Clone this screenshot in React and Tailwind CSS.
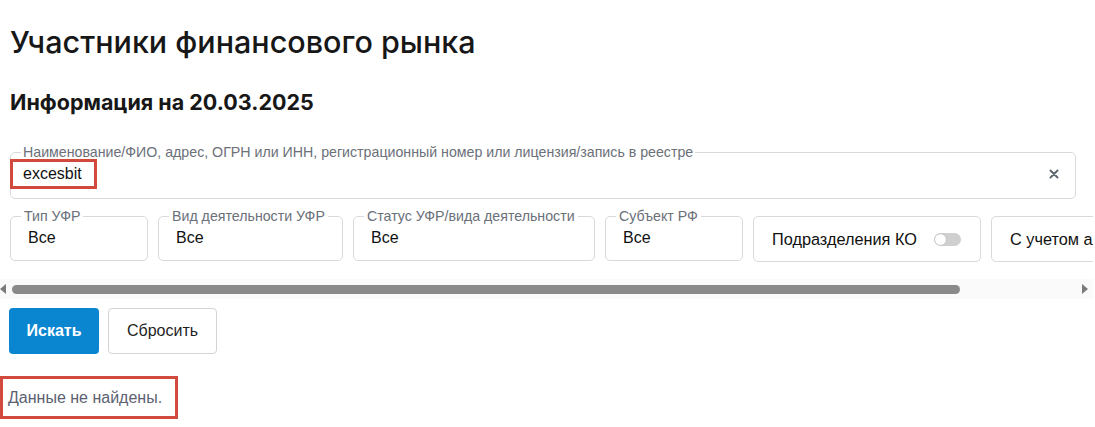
import React from "react";

const filters = [
  { label: "Тип УФР", value: "Все", w: "w-[138px]" },
  { label: "Вид деятельности УФР", value: "Все", w: "w-[185px]" },
  { label: "Статус УФР/вида деятельности", value: "Все", w: "w-[242px]" },
  { label: "Субъект РФ", value: "Все", w: "w-[138px]" },
];

const Toggle = () => (
  <span className="relative inline-flex items-center w-[27px] h-[13px] rounded-full bg-[#cfcfcf]">
    <span className="absolute left-[1px] w-[11px] h-[11px] rounded-full bg-white shadow-[0_0_1px_rgba(0,0,0,0.3)]" />
  </span>
);

const App = () => {
  return (
    <div className="w-[1095px] h-[427px] overflow-hidden bg-white font-['Liberation_Sans',Arial,sans-serif] text-[#1f1f1f]">
      <div className="px-[10px] pt-[24px]">
        <h1 className="font-['Inter',sans-serif] text-[30.5px] leading-[36px] font-medium text-[#171717]">
          Участники финансового рынка
        </h1>
        <h2 className="mt-[28px] font-['Inter',sans-serif] text-[21.5px] leading-[28px] font-bold text-[#171717]">
          Информация на 20.03.2025
        </h2>

        {/* Search */}
        <fieldset className="mt-[29px] w-[1066px] border border-[#d9d9d9] rounded-[5px] pb-[9px]">
          <legend className="ml-[10px] px-[2px] text-[14.2px] leading-[14px] text-[#6b7079]">
            Наименование/ФИО, адрес, ОГРН или ИНН, регистрационный номер или лицензия/запись в реестре
          </legend>
          <div className="flex items-center justify-between pr-[16px]">
            <span className="-ml-[1px] inline-flex items-center h-[30px] border-[3px] border-[#d24a3d] pl-[10px] pr-[12px] text-[16px] text-[#111]">
              excesbit
            </span>
            <svg width="10" height="10" viewBox="0 0 10 10" className="text-[#5f6670]">
              <path d="M1.5 1.5 L8.5 8.5 M8.5 1.5 L1.5 8.5" stroke="currentColor" strokeWidth="2" strokeLinecap="round" />
            </svg>
          </div>
        </fieldset>
      </div>

      {/* Filters row */}
      <div className="mt-[10px] w-[1093px] overflow-hidden">
        <div className="flex items-start gap-[10px] pl-[10px] w-max">
          {filters.map((f, i) => (
            <fieldset key={i} className={`${f.w} shrink-0 border border-[#d9d9d9] rounded-[5px] pl-[17px] pt-[3px] pb-[10px]`}>
              <legend className="-ml-[7px] px-[3px] text-[14.2px] leading-[14px] text-[#6b7079]">{f.label}</legend>
              <div className="text-[16px] leading-[24px] text-[#111]">{f.value}</div>
            </fieldset>
          ))}
          <div className="mt-[7px] w-[228px] h-[46px] shrink-0 border border-[#d9d9d9] rounded-[5px] flex items-center justify-between pl-[18px] pr-[19px]">
            <span className="text-[16.3px] text-[#111]">Подразделения КО</span>
            <Toggle />
          </div>
          <div className="mt-[7px] w-[260px] h-[46px] shrink-0 border border-[#d9d9d9] rounded-[5px] flex items-center pl-[18px]">
            <span className="text-[16.3px] text-[#111] whitespace-nowrap">С учетом альтернативных наименований</span>
          </div>
        </div>

        {/* Scrollbar */}
        <div className="mt-[17px] h-[20px] bg-[#fafafa] flex items-center">
          <svg width="6" height="10" viewBox="0 0 6 10" className="shrink-0">
            <path d="M6 0 L0 5 L6 10 Z" fill="#7a7a7a" />
          </svg>
          <div className="ml-[6px] w-[948px] h-[9px] rounded-full bg-[#8a8a8a]" />
          <div className="flex-1" />
          <svg width="6" height="10" viewBox="0 0 6 10" className="mr-[5px] shrink-0">
            <path d="M0 0 L6 5 L0 10 Z" fill="#7a7a7a" />
          </svg>
        </div>
      </div>

      {/* Buttons */}
      <div className="px-[9px] mt-[9px] flex gap-[9px]">
        <button className="w-[90px] h-[46px] rounded-[4px] bg-[#0a85d0] text-white font-bold text-[16px]">
          Искать
        </button>
        <button className="w-[109px] h-[46px] rounded-[4px] border border-[#d4d4d4] bg-white text-[#1f1f1f] text-[16px]">
          Сбросить
        </button>
      </div>

      {/* Result */}
      <div className="mt-[22px]">
        <div className="inline-flex items-center w-[178px] h-[43px] border-[3px] border-[#d24a3d] pl-[5px] text-[16px] text-[#5b6170]">
          Данные не найдены.
        </div>
      </div>
    </div>
  );
};

export default App;
